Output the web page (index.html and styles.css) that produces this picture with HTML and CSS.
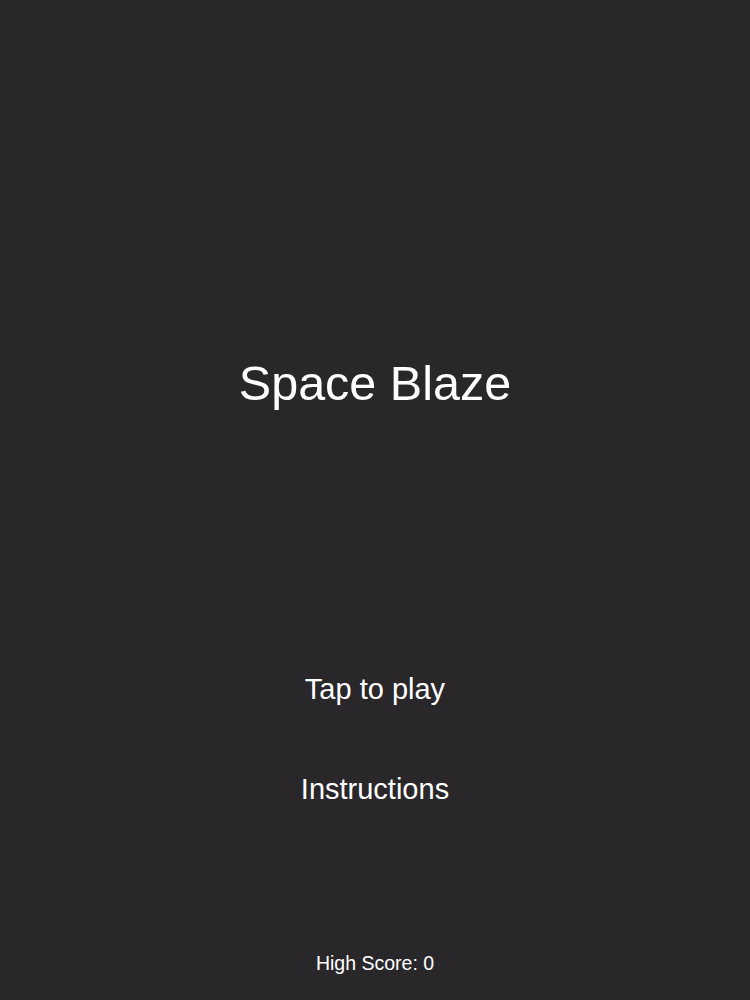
FILE: index.html
```html
<!DOCTYPE html>
<html lang="en">
<head>
	<meta charset="UTF-8">
	<meta name="viewport" content="width=device-width, initial-scale=1.0">
	<title>Space Blaze</title>
	<link rel="stylesheet" href="styles.css">
</head>
<body>
<div class="menu">
	<h1 class="game-title">Space Blaze</h1>
	<div class="menu-options">
		<a href="#" class="menu-item">Tap to play</a>
		<a href="#" class="menu-item">Instructions</a>
	</div>
	<p class="high-score">High Score: 0</p>
</div>
</body>
</html>
```

FILE: styles.css
```css
:root {
    --background: #29272a;
    --text: #ffffff;
}

* {
    margin: 0;
    padding: 0;
    box-sizing: border-box;
    font-family: 'Liberation Sans', Arial, sans-serif;
}

body {
    background: var(--background);
    color: var(--text);
    min-height: 100vh;
    overflow: hidden;
}

.menu {
    display: flex;
    flex-direction: column;
    align-items: center;
    padding-top: 355px;
}

.game-title {
    font-size: 48.5px;
    font-weight: 400;
    line-height: 56px;
}

.menu-options {
    display: flex;
    flex-direction: column;
    align-items: center;
    gap: 60px;
    margin-top: 258px;
}

.menu-item {
    color: var(--text);
    text-decoration: none;
    font-size: 29px;
    line-height: 40px;
}

.high-score {
    margin-top: 140px;
    font-size: 19.5px;
    line-height: 28px;
}
```
